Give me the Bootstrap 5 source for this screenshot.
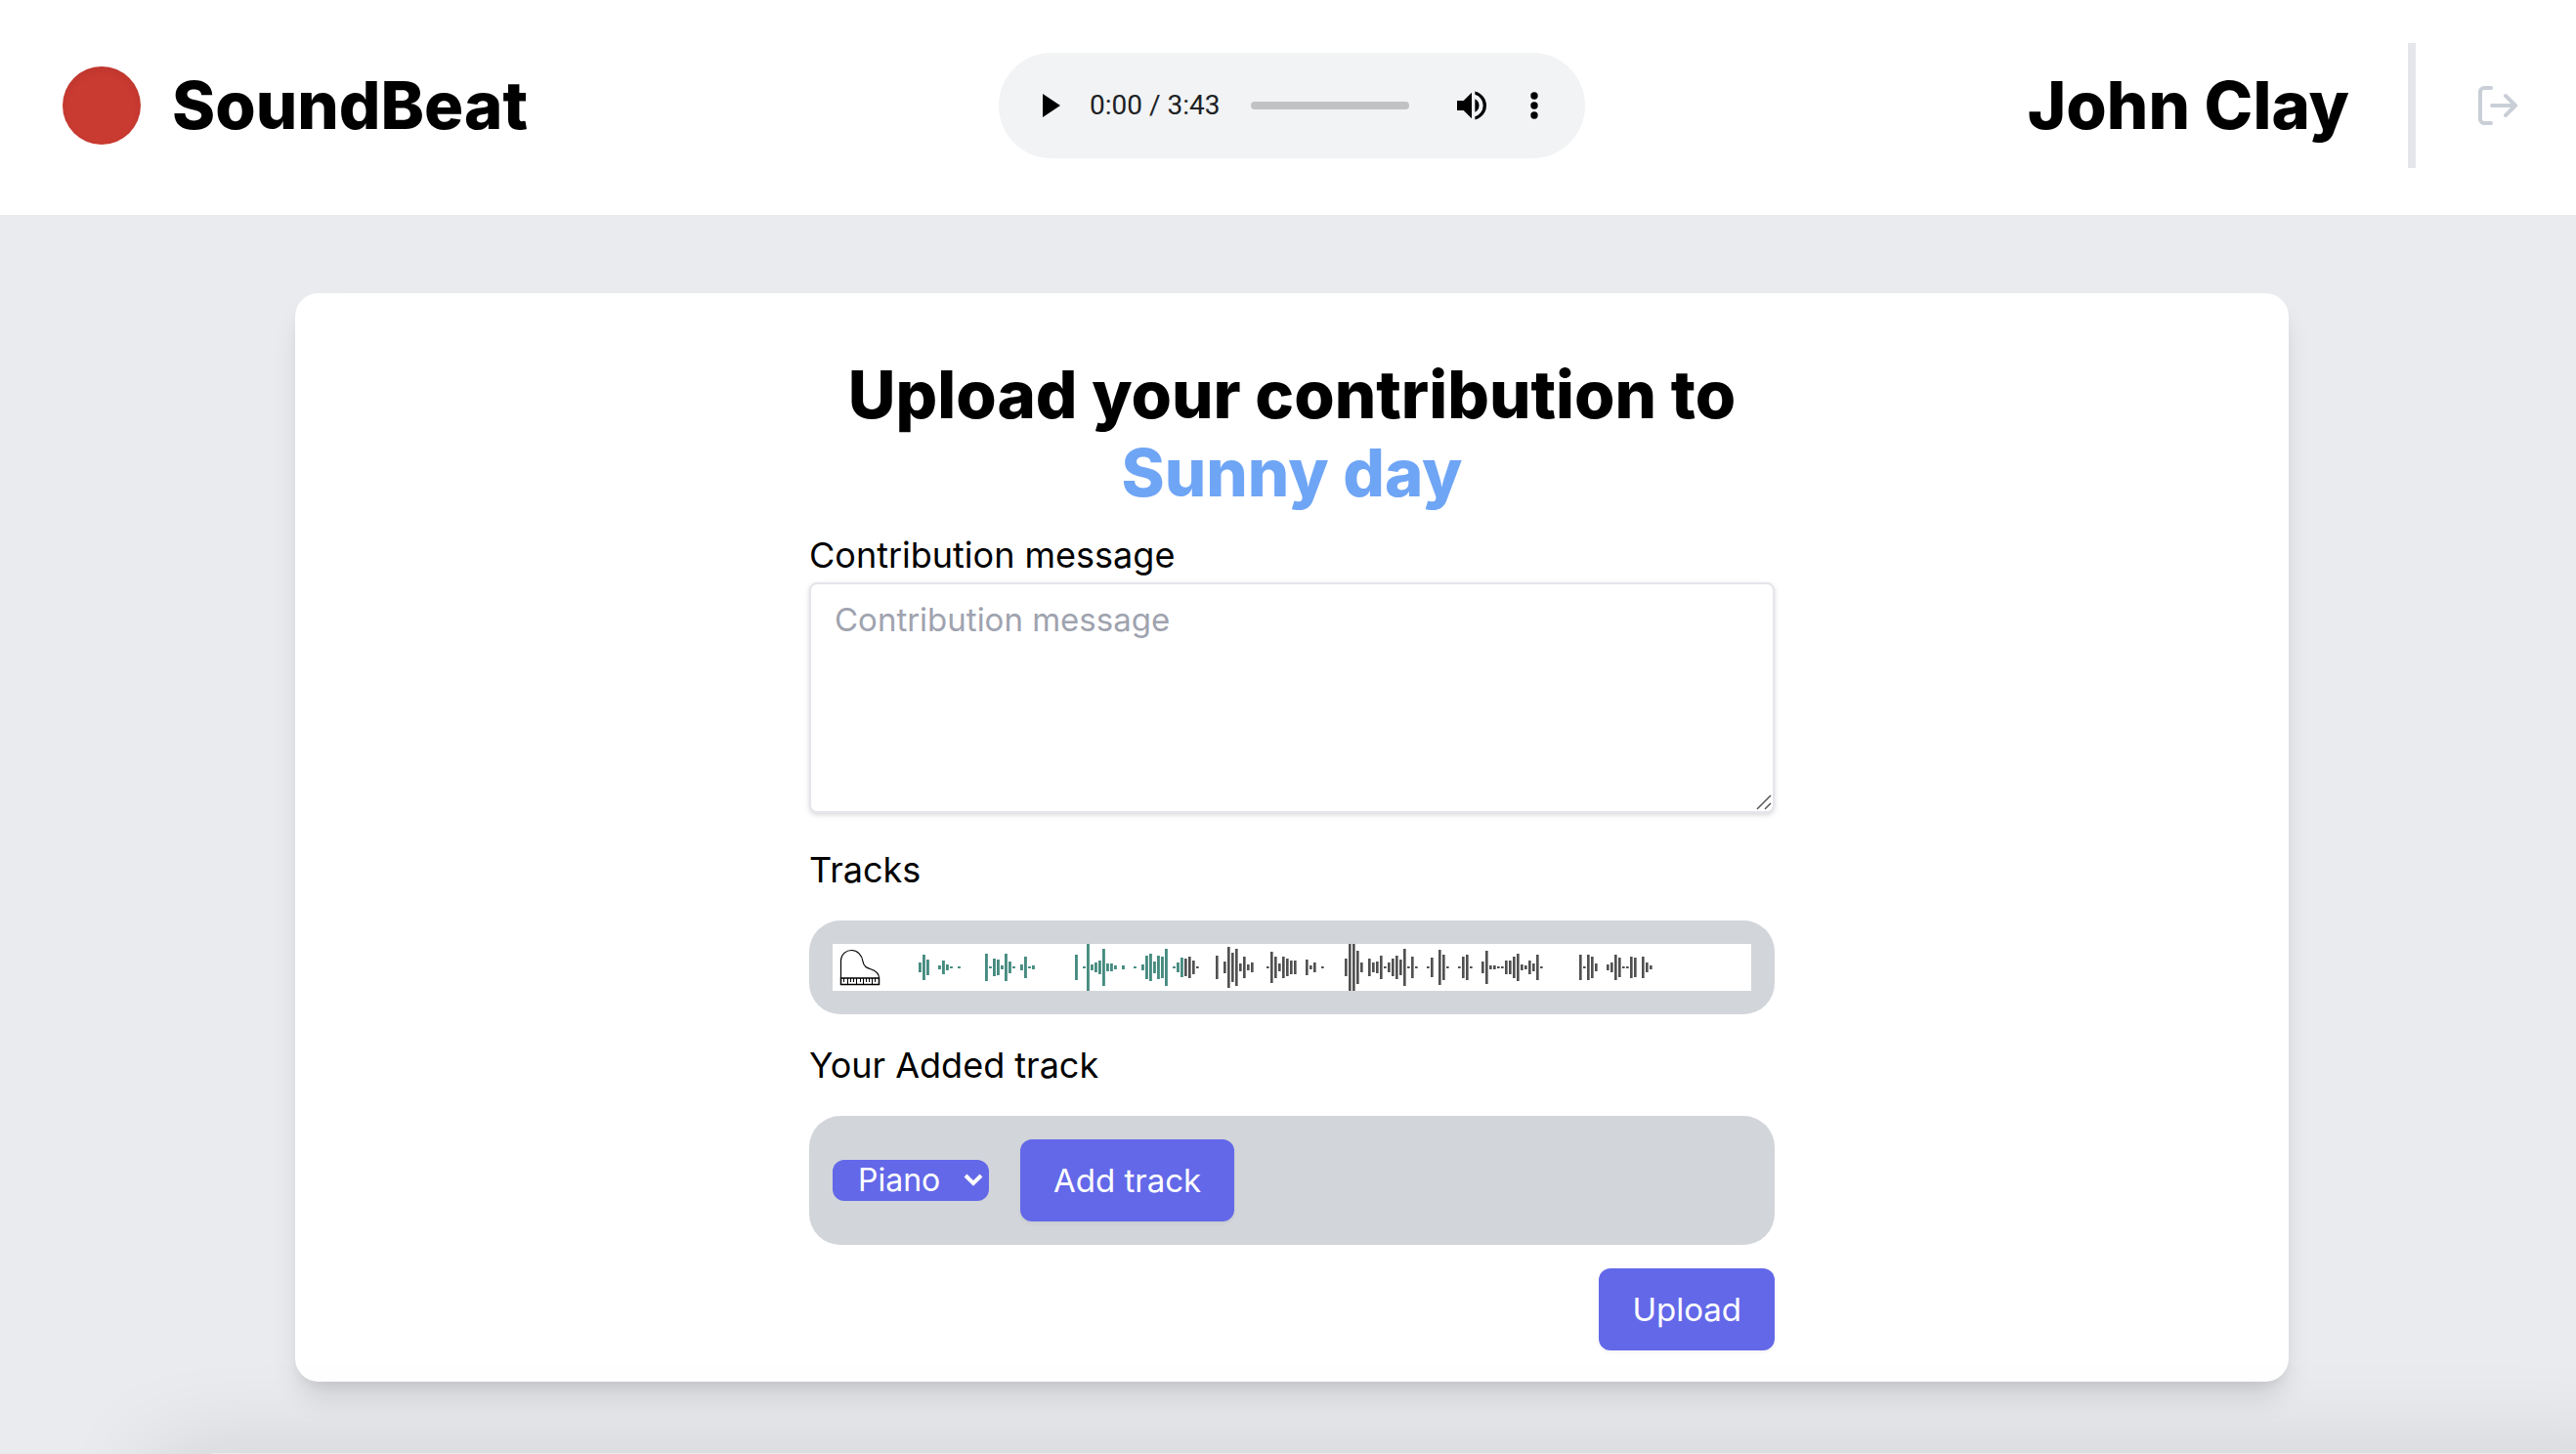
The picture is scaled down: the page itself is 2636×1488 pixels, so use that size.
<!DOCTYPE html>
<html lang="en">
<head>
<meta charset="utf-8">
<meta name="viewport" content="width=device-width, initial-scale=1">
<title>SoundBeat</title>
<link rel="stylesheet" href="https://cdn.jsdelivr.net/npm/bootstrap@5.3.0/dist/css/bootstrap.min.css">
<style>
  :root { --indigo: #6368e8; --panel: #d2d5da; --line: #e5e6eb; }
  body { font-family: Inter, "Liberation Sans", sans-serif; font-size: 33px; line-height: 48px; color: #000; background: #eaebef; min-height: 100vh; overflow-x: hidden; }
  .topbar { height: 220px; padding: 0 56px 4px 64px; }
  .side { flex: 1 1 0; }
  .display-title { font-size: 67px; line-height: 80px; font-weight: 800; margin: 0; }
  .disc { width: 80px; height: 80px; background: #c93a31; box-shadow: inset 0 4px 8px rgba(0,0,0,.06); }
  .brand { gap: 32px; color: #000; text-decoration: none; }
  .divider { width: 8px; height: 128px; background: var(--line); margin: 0 60px; }
  .logout { border: 0; padding: 0; background: none; color: #cacfd7; line-height: 0; }
  .player { width: 600px; height: 108px; border-radius: 54px; background: #f1f3f4; padding: 0 48px 0 36px; }
  .player button { border: 0; padding: 0; background: none; line-height: 0; color: #000; }
  .clock { font-family: Roboto, sans-serif; font-size: 28px; line-height: 32px; color: #202124; }
  .seek { appearance: none; width: 162px; height: 8px; border-radius: 4px; background: #c1c2c3; margin: 0 44px 0 32px; }
  .seek::-webkit-slider-thumb { appearance: none; width: 0; height: 0; }
  .stage { padding: 80px 0 73px 8px; }
  .sheet { width: 78%; max-width: 2040px; border-radius: 24px; background: #fff; padding: 64px 24px 32px; box-shadow: 0 20px 30px -6px rgba(0,0,0,.12), 0 8px 12px -4px rgba(0,0,0,.06); }
  .form-col { width: 988px; max-width: 100%; }
  .song { color: #6fa5f5; }
  .field-label { display: block; font-size: 36px; line-height: 56px; margin: 0; }
  .tracks-title { margin-top: 30px; }
  .added { margin-top: 24px; }
  .message { display: block; width: 100%; height: 236px; border: 2px solid var(--line); border-radius: 8px; padding: 12px 24px; line-height: 48px; box-shadow: 0 2px 6px rgba(0,0,0,.1), 0 2px 4px rgba(0,0,0,.06); resize: none; }
  .message::placeholder { color: #9fa3af; opacity: 1; }
  .grip { position: absolute; right: 3px; bottom: 3px; pointer-events: none; }
  .panel { background: var(--panel); border-radius: 32px; padding: 24px; margin-top: 24px; }
  .wave { display: block; width: 100%; height: 48px; background: #fff; }
  .action { border: 0; border-radius: 12px; background: var(--indigo); color: #fff; height: 84px; padding: 0 34px; box-shadow: 0 2px 4px rgba(0,0,0,.05); }
  .add { margin-left: 32px; }
  .picker { position: relative; }
  .picker select { appearance: none; display: block; border: 0; border-radius: 12px; background: var(--indigo); color: #fff; width: 160px; height: 42px; font-size: 32px; line-height: 42px; padding: 0 0 0 26px; }
  .picker svg { position: absolute; right: 6px; top: 14px; pointer-events: none; }
  .below { height: 1px; margin-left: 216px; box-shadow: 0 60px 100px 60px rgba(0,0,0,.12); }
</style>
</head>
<body>
<header class="topbar bg-white d-flex align-items-center">
  <div class="side d-flex"><a href="#" class="brand d-flex align-items-center"><span class="disc rounded-circle"></span><span class="display-title">SoundBeat</span></a></div>
  <div class="player d-flex align-items-center" role="group" aria-label="Audio player">
    <button type="button" aria-label="Play"><svg width="57" height="48" viewBox="0 0 57 48"><path d="M9 12v24l18-12z" fill="currentColor"/></svg></button>
    <span class="clock text-nowrap">0:00 / 3:43</span>
    <input class="seek" type="range" min="0" max="223" value="0" aria-label="Seek">
    <button type="button" aria-label="Mute"><svg width="40" height="40" viewBox="0 0 24 24" fill="currentColor"><path d="M3 9v6h4l5 5V4L7 9H3zm13.500 3A4.500 4.500 0 0 0 14 7.970v8.050A4.470 4.470 0 0 0 16.500 12zM14 3.230v2.060a7 7 0 0 1 0 13.420v2.060a9 9 0 0 0 0-17.540z"/></svg></button>
    <button type="button" class="ms-auto" aria-label="More"><svg width="8" height="28" viewBox="0 0 8 28" fill="currentColor"><circle cx="4" cy="4" r="3.700"/><circle cx="4" cy="14" r="3.700"/><circle cx="4" cy="24" r="3.700"/></svg></button>
  </div>
  <div class="side d-flex align-items-center justify-content-end">
    <span class="display-title text-nowrap">John Clay</span>
    <span class="divider"></span>
    <button type="button" class="logout" aria-label="Log out"><svg width="48" height="48" viewBox="0 0 48 48" fill="none" stroke="currentColor" stroke-width="4" stroke-linecap="round" stroke-linejoin="round"><path d="M17 6H10a4 4 0 0 0-4 4v28a4 4 0 0 0 4 4h7M18 24h24M32 14l10 10-10 10"/></svg></button>
  </div>
</header>
<main class="stage">
  <section class="sheet mx-auto">
    <form class="form-col mx-auto">
      <h1 class="display-title text-center mb-3">Upload your contribution to<br><span class="song">Sunny day</span></h1>
      <label class="field-label" for="message">Contribution message</label>
      <div class="position-relative">
        <textarea class="message" id="message" placeholder="Contribution message"></textarea>
        <svg class="grip" width="16" height="16" viewBox="0 0 16 16" fill="none" stroke="#555" stroke-width="1.500"><path d="M1 15L15 1M9 15l6-6"/></svg>
      </div>
      <h2 class="field-label fw-normal tracks-title">Tracks</h2>
      <div class="panel">
        <svg class="wave" id="wave" viewBox="0 0 940 48" preserveAspectRatio="xMinYMid meet" role="img" aria-label="Piano track waveform">
          <g fill="none" stroke="#000" stroke-width="1">
            <path d="M8.500 35V17C9 10 14 6.500 19.500 6.500S30 11 31 18c1 7 7 7 11 9s5.500 4 5.500 8" stroke-width="1.200"/>
            <path d="M8.500 35h39v6.500h-39z" stroke-width="1.500"/>
            <path d="M11.500 35v4M15.500 35v6M18.500 35v4M21.500 35v4M24.500 35v6M28.500 35v4M31.500 35v6M34.500 35v4M37.500 35v4M40.500 35v6M43.500 35v4"/>
          </g>
        </svg>
      </div>
      <label class="field-label added" for="instrument">Your Added track</label>
      <div class="panel d-flex align-items-center">
        <div class="picker">
          <select id="instrument"><option>Piano</option><option>Guitar</option><option>Drums</option></select>
          <svg width="20" height="14" viewBox="0 0 20 14" fill="none" stroke="#fff" stroke-width="4"><path d="M2 2l8 8 8-8"/></svg>
        </div>
        <button type="button" class="action add">Add track</button>
      </div>
      <div class="d-flex justify-content-end mt-4"><button type="submit" class="action">Upload</button></div>
    </form>
  </section>
</main>
<div class="below"></div>
<script>
  // Waveform columns: [slot, height]; slots are 4 units apart.
  const bars = [[22,10],[23,26],[24,16],[27,4],[28,14],[29,6],[30,2],[32,2],[39,28],[40,2],[41,18],[42,16],[43,4],[44,28],[45,12],[46,2],[48,6],[49,22],[50,2],[51,4],[62,26],[64,2],[65,48],[66,6],[67,10],[68,14],[69,38],[70,8],[71,8],[72,4],[74,4],[77,2],[79,6],[80,24],[81,28],[82,12],[83,24],[84,22],[85,38],[87,2],[88,10],[89,20],[90,18],[91,22],[92,14],[93,2],[98,24],[100,12],[101,42],[102,30],[103,38],[104,8],[105,22],[106,6],[107,10],[111,2],[112,32],[113,22],[114,8],[115,22],[116,18],[117,14],[118,14],[121,16],[122,4],[123,10],[125,2],[131,18],[132,48],[133,48],[134,34],[135,10],[137,18],[138,10],[139,12],[140,24],[141,2],[142,10],[143,18],[144,24],[145,16],[146,38],[147,2],[148,22],[149,2],[152,2],[153,20],[155,36],[156,26],[157,2],[160,2],[161,22],[162,26],[163,2],[166,12],[167,34],[168,4],[169,4],[170,2],[171,2],[172,14],[173,14],[174,22],[175,28],[176,6],[177,4],[178,14],[179,8],[180,26],[181,2],[191,26],[192,2],[193,26],[194,22],[195,8],[198,6],[199,10],[200,26],[201,20],[202,2],[203,2],[204,22],[205,20],[207,22],[208,10],[209,4]];
  const wave = document.getElementById('wave');
  const add = (x, w, h, fill) => {
    const r = document.createElementNS('http://www.w3.org/2000/svg', 'rect');
    for (const [k, v] of Object.entries({ x, y: 24 - h / 2, width: w, height: h, fill })) r.setAttribute(k, v);
    wave.append(r);
  };
  for (const [slot, h] of bars) {
    const played = slot < 90;
    add(slot * 4, 2, h, played ? '#468b80' : '#505050');
    add(slot * 4 + 2, 1, h, played ? '#5e9b91' : '#8f8f8f');
  }
</script>
<script src="https://cdn.jsdelivr.net/npm/bootstrap@5.3.0/dist/js/bootstrap.bundle.min.js"></script>
</body>
</html>
